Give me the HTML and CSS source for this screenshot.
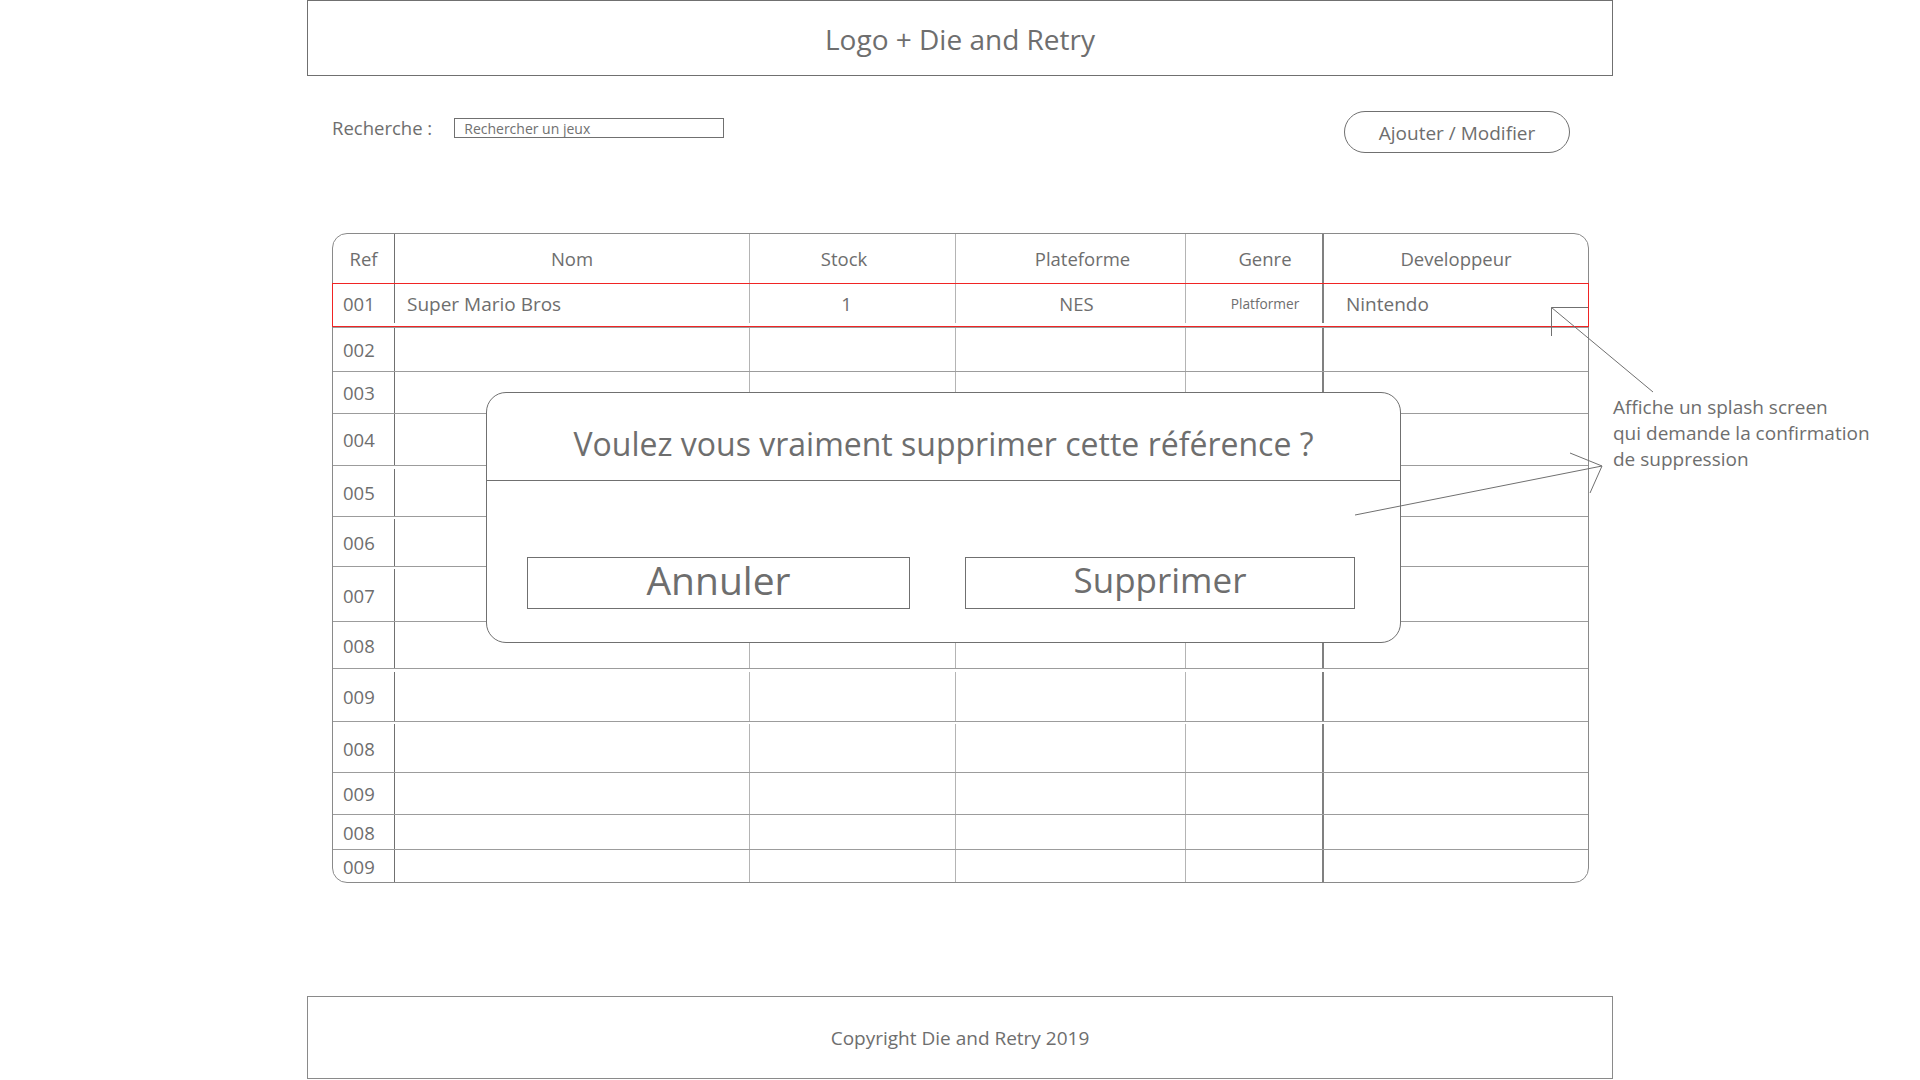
FILE: index.html
```html
<!DOCTYPE html>
<html lang="fr">
<head>
<meta charset="utf-8">
<title>Die and Retry</title>
<link rel="stylesheet" href="styles.css">
</head>
<body>
<div class="page">
  <header class="site-header">Logo + Die and Retry</header>

  <div class="toolbar">
    <div class="search">
      <label class="search-label" for="q">Recherche :</label>
      <input id="q" class="search-input" type="text" placeholder="Rechercher un jeux">
    </div>
    <button class="btn-pill" type="button">Ajouter / Modifier</button>
  </div>

  <div class="table-wrap">
    <div class="row head">
      <div class="cell">Ref</div>
      <div class="cell">Nom</div>
      <div class="cell h-stock">Stock</div>
      <div class="cell h-plat">Plateforme</div>
      <div class="cell h-genre">Genre</div>
      <div class="cell">Developpeur</div>
    </div>
    <div class="row selected">
      <div class="cell">001</div>
      <div class="cell name">Super Mario Bros</div>
      <div class="cell center stock">1</div>
      <div class="cell center plat">NES</div>
      <div class="cell center small">Platformer</div>
      <div class="cell dev">Nintendo</div>
    </div>
    <div class="row"><div class="cell">002</div><div class="cell"></div><div class="cell"></div><div class="cell"></div><div class="cell"></div><div class="cell"></div></div>
    <div class="row"><div class="cell">003</div><div class="cell"></div><div class="cell"></div><div class="cell"></div><div class="cell"></div><div class="cell"></div></div>
    <div class="row"><div class="cell">004</div><div class="cell"></div><div class="cell"></div><div class="cell"></div><div class="cell"></div><div class="cell"></div></div>
    <div class="row"><div class="cell">005</div><div class="cell"></div><div class="cell"></div><div class="cell"></div><div class="cell"></div><div class="cell"></div></div>
    <div class="row"><div class="cell">006</div><div class="cell"></div><div class="cell"></div><div class="cell"></div><div class="cell"></div><div class="cell"></div></div>
    <div class="row"><div class="cell">007</div><div class="cell"></div><div class="cell"></div><div class="cell"></div><div class="cell"></div><div class="cell"></div></div>
    <div class="row"><div class="cell">008</div><div class="cell"></div><div class="cell"></div><div class="cell"></div><div class="cell"></div><div class="cell"></div></div>
    <div class="row"><div class="cell">009</div><div class="cell"></div><div class="cell"></div><div class="cell"></div><div class="cell"></div><div class="cell"></div></div>
    <div class="row"><div class="cell">008</div><div class="cell"></div><div class="cell"></div><div class="cell"></div><div class="cell"></div><div class="cell"></div></div>
    <div class="row"><div class="cell">009</div><div class="cell"></div><div class="cell"></div><div class="cell"></div><div class="cell"></div><div class="cell"></div></div>
    <div class="row"><div class="cell">008</div><div class="cell"></div><div class="cell"></div><div class="cell"></div><div class="cell"></div><div class="cell"></div></div>
    <div class="row"><div class="cell">009</div><div class="cell"></div><div class="cell"></div><div class="cell"></div><div class="cell"></div><div class="cell"></div></div>

    <div class="modal">
      <div class="modal-head">Voulez vous vraiment supprimer cette référence ?</div>
      <div class="modal-actions">
        <button class="modal-btn cancel" type="button">Annuler</button>
        <button class="modal-btn delete" type="button">Supprimer</button>
      </div>
    </div>
  </div>

  <footer class="site-footer">Copyright Die and Retry 2019</footer>
</div>

<svg class="annot-lines" width="1920" height="1080" viewBox="0 0 1920 1080" xmlns="http://www.w3.org/2000/svg">
  <g fill="none" stroke="#707070" stroke-width="1">
    <path d="M1551.5 307.5 H1588"/>
    <path d="M1551.5 307.5 V336"/>
    <path d="M1551.5 307.5 L1653 392"/>
    <path d="M1355 515 L1602 466"/>
    <path d="M1570 453 L1602 466 L1590 493"/>
  </g>
</svg>
<p class="annot-text">Affiche un splash screen<br>qui demande la confirmation<br>de suppression</p>
</body>
</html>
```

FILE: styles.css
```css
html, body {
  margin: 0;
  padding: 0;
  background: #ffffff;
}

body {
  position: relative;
  min-height: 1080px;
  font-family: "Open Sans", "Noto Sans", "Liberation Sans", sans-serif;
  color: #6e6e6e;
}

.page {
  width: 1306px;
  margin: 0 auto;
}

/* ---------- header ---------- */
.site-header {
  height: 76px;
  box-sizing: border-box;
  border: 1px solid #707070;
  display: flex;
  align-items: center;
  justify-content: center;
  padding-top: 2px;
  font-size: 28px;
}

/* ---------- toolbar ---------- */
.toolbar {
  display: flex;
  justify-content: space-between;
  align-items: flex-start;
  margin-top: 35px;
  padding: 0 43px 0 25px;
}

.search {
  display: flex;
  align-items: center;
  gap: 22px;
  margin-top: 7px;
}

.search-label {
  font-size: 18.5px;
  line-height: 20px;
}

.search-input {
  width: 270px;
  height: 20px;
  box-sizing: border-box;
  border: 1px solid #707070;
  border-radius: 0;
  padding: 0 9px;
  font-family: inherit;
  font-size: 14px;
  color: #6e6e6e;
  outline: none;
}

.search-input::placeholder {
  color: #707070;
  opacity: 1;
}

.btn-pill {
  width: 226px;
  height: 42px;
  box-sizing: border-box;
  border: 1px solid #707070;
  border-radius: 21px;
  background: #ffffff;
  font-family: inherit;
  font-size: 19px;
  color: #6e6e6e;
  padding: 2px 0 0;
}

/* ---------- table ---------- */
.table-wrap {
  position: relative;
  width: 1257px;
  box-sizing: border-box;
  margin: 80px 0 0 25px;
  border: 1px solid #8a8a8a;
  border-radius: 15px;
}

.row {
  display: grid;
  grid-template-columns: 62px 355px 206px 230px 138px 264px;
  box-sizing: border-box;
  border-bottom: 1px solid #9c9c9c;
  position: relative;
}

.row:nth-child(1)  { height: 50px; }
.row:nth-child(2)  { height: 44px; }
.row:nth-child(3)  { height: 44px; }
.row:nth-child(4)  { height: 42px; }
.row:nth-child(5)  { height: 52px; }
.row:nth-child(6)  { height: 51px; padding-top: 3px; }
.row:nth-child(7)  { height: 50px; padding-top: 2px; }
.row:nth-child(8)  { height: 55px; padding-top: 2px; }
.row:nth-child(9)  { height: 47px; }
.row:nth-child(10) { height: 53px; padding-top: 3px; }
.row:nth-child(11) { height: 51px; padding-top: 2px; }
.row:nth-child(12) { height: 42px; }
.row:nth-child(13) { height: 35px; }
.row:nth-child(14) { height: 32px; border-bottom: none; }

.cell {
  box-sizing: border-box;
  border-right: 1px solid #b4b4b4;
  display: flex;
  align-items: center;
  font-size: 18.5px;
  white-space: nowrap;
}

.cell:nth-child(1) {
  border-right-color: #707070;
  padding-left: 10px;
}

.cell:nth-child(5) {
  border-right: 2px solid #808080;
}

.cell:nth-child(6) {
  border-right: none;
}

.head .cell {
  justify-content: center;
  padding-left: 0;
}

.head .cell.h-stock { padding-right: 17px; }
.head .cell.h-plat { padding-left: 24px; }
.head .cell.h-genre { padding-left: 22px; }

.selected {
  padding-bottom: 4px;
}

.selected::after {
  content: "";
  position: absolute;
  top: -1px;
  bottom: 0;
  left: -1px;
  right: -1px;
  border: 1px solid #f02424;
  pointer-events: none;
}

.cell.name { padding-left: 12px; font-size: 19px; }
.cell.center { justify-content: center; }
.cell.stock { padding-right: 12px; }
.cell.plat { padding-left: 12px; }
.cell.small { font-size: 13.7px; padding-left: 22px; }
.cell.dev { padding-left: 22px; font-size: 19px; }

/* ---------- modal ---------- */
.modal {
  position: absolute;
  left: 153px;
  top: 158px;
  width: 915px;
  height: 251px;
  box-sizing: border-box;
  border: 1px solid #707070;
  border-radius: 20px;
  background: #ffffff;
  z-index: 2;
}

.modal-head {
  height: 88px;
  box-sizing: border-box;
  border-bottom: 1px solid #707070;
  display: flex;
  align-items: center;
  justify-content: center;
  padding-top: 14px;
  font-size: 32px;
}

.modal-actions {
  display: flex;
  justify-content: space-between;
  padding: 76px 45px 0 40px;
}

.modal-btn {
  height: 52px;
  box-sizing: border-box;
  border: 1px solid #707070;
  border-radius: 0;
  background: #ffffff;
  font-family: inherit;
  color: #6e6e6e;
  padding: 0 0 7px;
  line-height: 1;
}

.modal-btn.cancel {
  width: 383px;
  font-size: 39px;
}

.modal-btn.delete {
  width: 390px;
  font-size: 35px;
}

/* ---------- footer ---------- */
.site-footer {
  margin-top: 113px;
  height: 83px;
  box-sizing: border-box;
  border: 1px solid #8a8a8a;
  display: flex;
  align-items: center;
  justify-content: center;
  font-size: 19px;
}

/* ---------- annotation ---------- */
.annot-lines {
  position: absolute;
  left: 0;
  top: 0;
  pointer-events: none;
  z-index: 5;
}

.annot-text {
  position: absolute;
  left: 1613px;
  top: 394px;
  margin: 0;
  font-size: 19px;
  line-height: 26px;
  color: #6e6e6e;
}
```
